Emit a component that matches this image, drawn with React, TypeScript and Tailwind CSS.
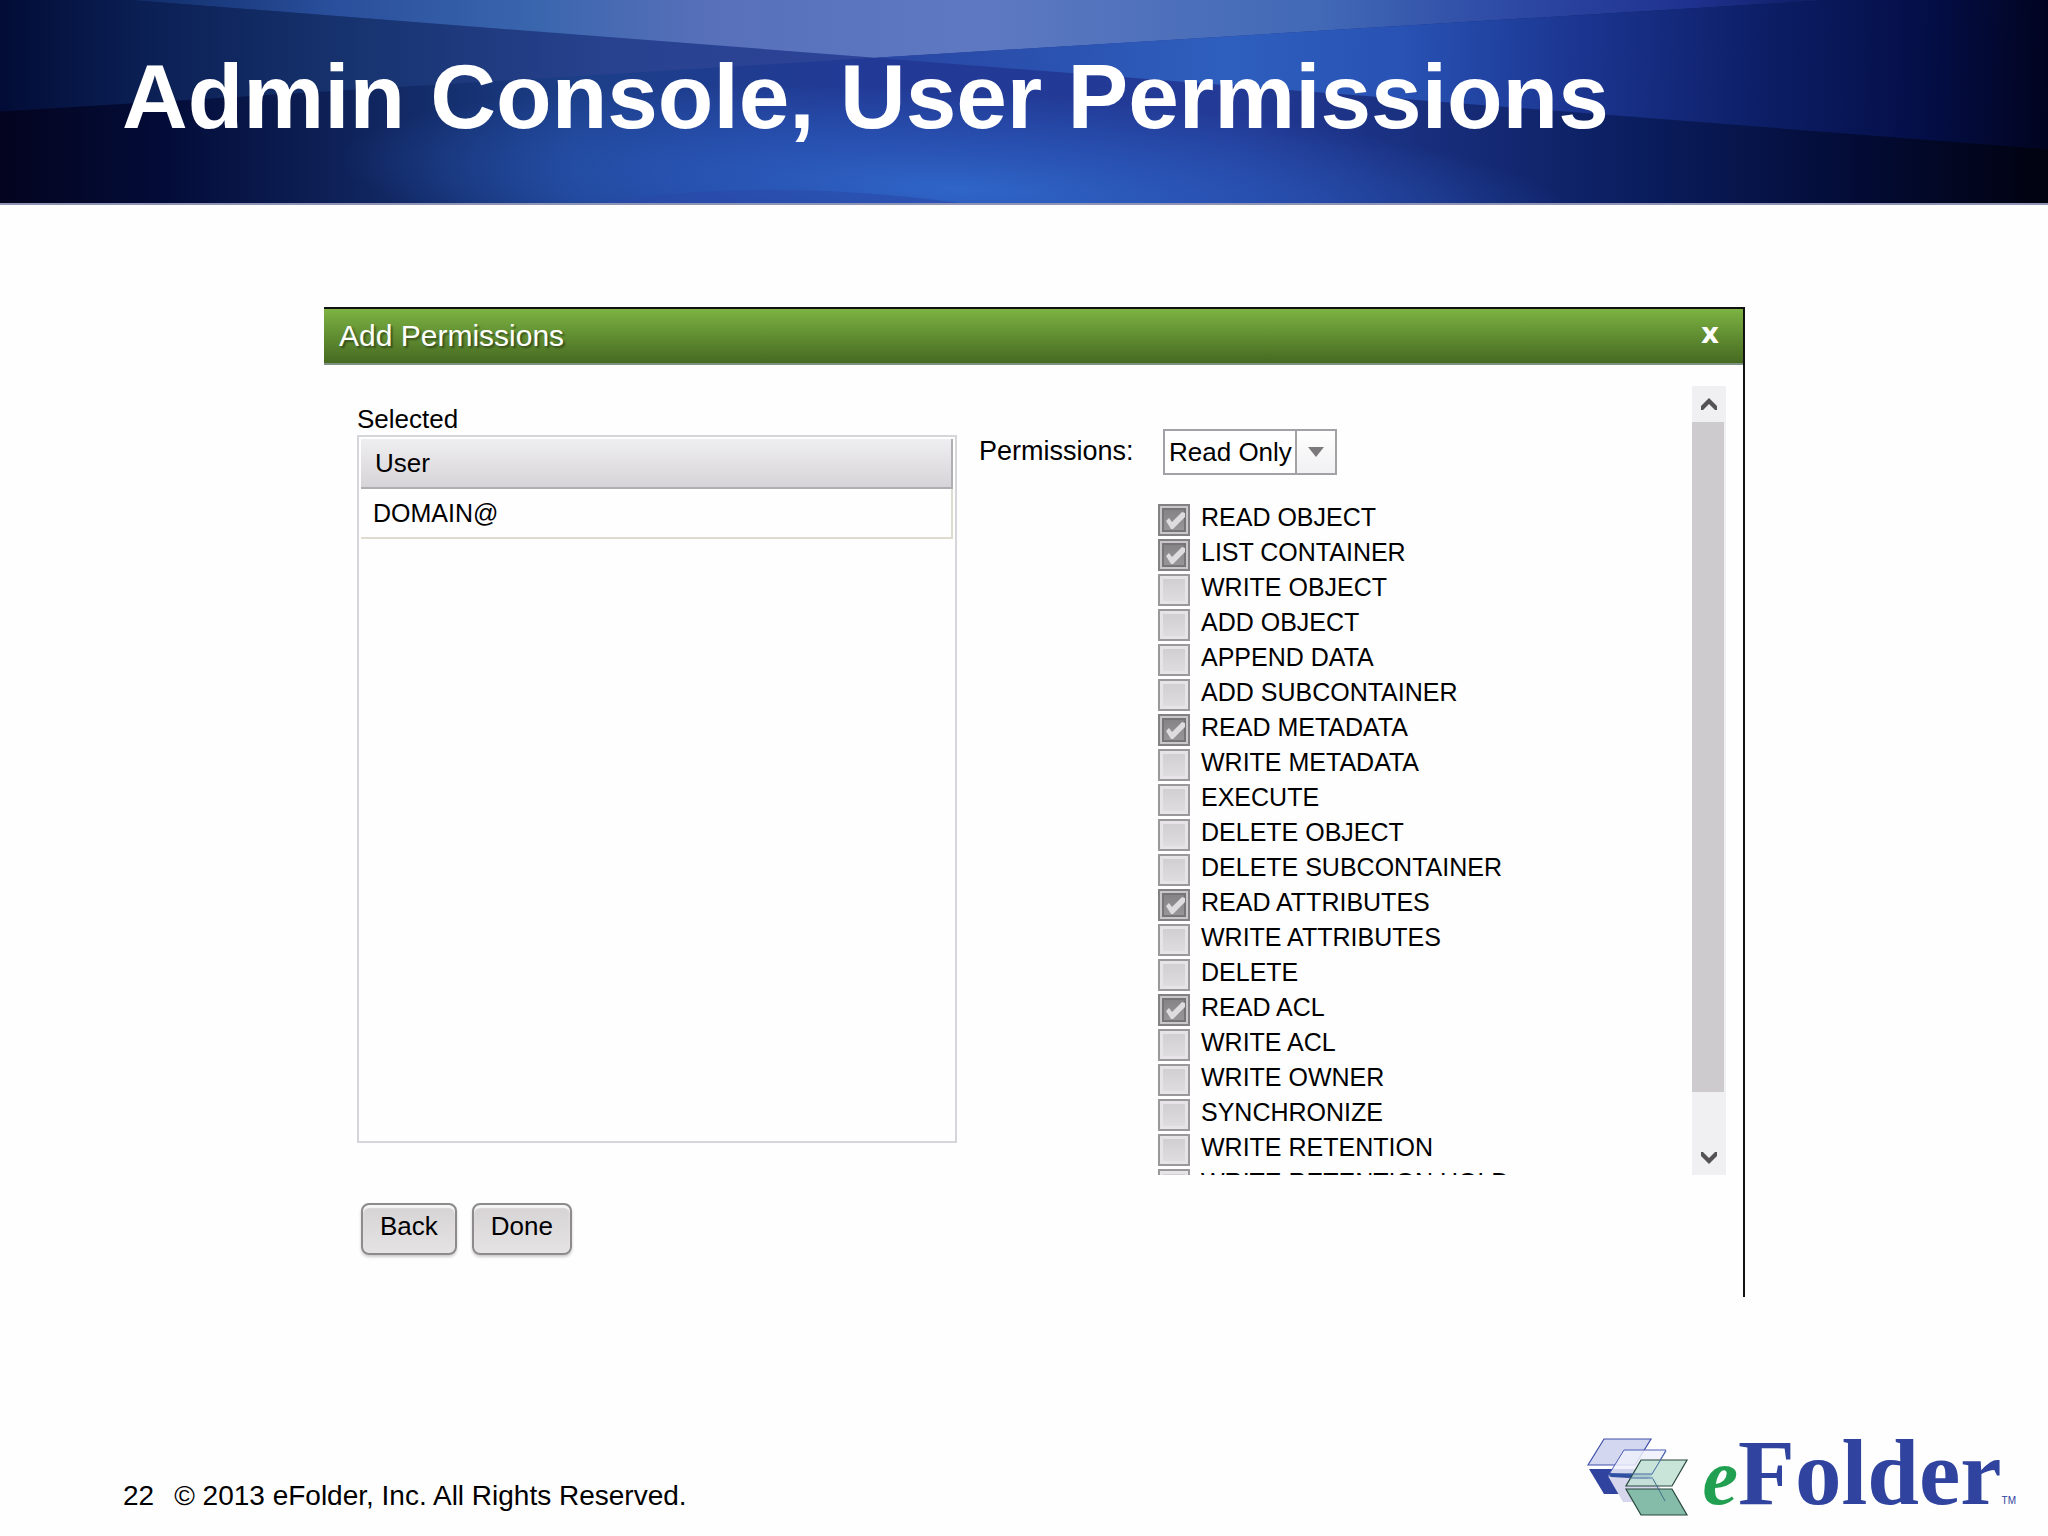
import { useState } from "react";

const PERMISSIONS = [
  { name: "READ OBJECT", on: true },
  { name: "LIST CONTAINER", on: true },
  { name: "WRITE OBJECT", on: false },
  { name: "ADD OBJECT", on: false },
  { name: "APPEND DATA", on: false },
  { name: "ADD SUBCONTAINER", on: false },
  { name: "READ METADATA", on: true },
  { name: "WRITE METADATA", on: false },
  { name: "EXECUTE", on: false },
  { name: "DELETE OBJECT", on: false },
  { name: "DELETE SUBCONTAINER", on: false },
  { name: "READ ATTRIBUTES", on: true },
  { name: "WRITE ATTRIBUTES", on: false },
  { name: "DELETE", on: false },
  { name: "READ ACL", on: true },
  { name: "WRITE ACL", on: false },
  { name: "WRITE OWNER", on: false },
  { name: "SYNCHRONIZE", on: false },
  { name: "WRITE RETENTION", on: false },
  { name: "WRITE RETENTION HOLD", on: false },
];

const HeaderArt = () => (
  <svg
    className="absolute inset-0 h-full w-full"
    viewBox="0 0 2048 204"
    preserveAspectRatio="none"
    aria-hidden="true"
  >
    <defs>
      <linearGradient id="base" x1="0" x2="1" y1="0" y2="0">
        <stop offset="0" stopColor="#04041f" />
        <stop offset="0.08" stopColor="#030c38" />
        <stop offset="0.18" stopColor="#10255e" />
        <stop offset="0.28" stopColor="#1c3f88" />
        <stop offset="0.42" stopColor="#223a96" />
        <stop offset="0.6" stopColor="#233a96" />
        <stop offset="0.7" stopColor="#182e7c" />
        <stop offset="0.8" stopColor="#0a1d5e" />
        <stop offset="0.91" stopColor="#030b34" />
        <stop offset="1" stopColor="#01020f" />
      </linearGradient>
      <linearGradient id="left" x1="0" x2="875" y1="0" y2="0" gradientUnits="userSpaceOnUse">
        <stop offset="0" stopColor="#020c36" />
        <stop offset="0.15" stopColor="#0a1e52" />
        <stop offset="0.4" stopColor="#17336f" />
        <stop offset="0.7" stopColor="#28428f" />
        <stop offset="1" stopColor="#2e4398" />
      </linearGradient>
      <linearGradient id="top" x1="130" x2="1830" y1="0" y2="0" gradientUnits="userSpaceOnUse">
        <stop offset="0" stopColor="#0f2c68" />
        <stop offset="0.12" stopColor="#2a4f9c" />
        <stop offset="0.24" stopColor="#3a66ae" />
        <stop offset="0.34" stopColor="#5870ba" />
        <stop offset="0.5" stopColor="#5e79c2" />
        <stop offset="0.7" stopColor="#4169b6" />
        <stop offset="0.8" stopColor="#2f4ca6" />
        <stop offset="0.92" stopColor="#1f318e" />
        <stop offset="1" stopColor="#0d1b60" />
      </linearGradient>
      <linearGradient id="right" x1="875" x2="2048" y1="0" y2="40" gradientUnits="userSpaceOnUse">
        <stop offset="0" stopColor="#2845a2" />
        <stop offset="0.3" stopColor="#2e5fbe" />
        <stop offset="0.45" stopColor="#2852b4" />
        <stop offset="0.6" stopColor="#1b3590" />
        <stop offset="0.75" stopColor="#0d1f68" />
        <stop offset="0.9" stopColor="#040e46" />
        <stop offset="1" stopColor="#010420" />
      </linearGradient>
      <radialGradient id="glow">
        <stop offset="0" stopColor="#2f66c8" />
        <stop offset="0.5" stopColor="#2a58ba" stopOpacity="0.7" />
        <stop offset="1" stopColor="#2a58ba" stopOpacity="0" />
      </radialGradient>
    </defs>
    <rect width="2048" height="204" fill="url(#base)" />
    <polygon points="0,0 130,0 875,58 0,112" fill="url(#left)" />
    <ellipse cx="960" cy="190" rx="620" ry="100" fill="url(#glow)" transform="rotate(3 960 190)" />
    <polygon points="130,0 1830,0 875,58" fill="url(#top)" />
    <polygon points="875,58 1830,0 2048,0 2048,150" fill="url(#right)" />
    <path d="M600 204Q760 178 960 204z" fill="#2a4aa8" fillOpacity="0.6" />
  </svg>
);

const CheckBox = ({ id, defaultChecked }: { id: string; defaultChecked: boolean }) => (
  <span className="relative block h-8 w-8 shrink-0">
    <input
      id={id}
      type="checkbox"
      defaultChecked={defaultChecked}
      className="peer block h-8 w-8 appearance-none border-2 border-[#9a989b] bg-linear-to-b from-[#cfcdd0] to-[#e0dee1] shadow-[inset_0_0_0_3px_#e6e4e7] checked:border-[#838184] checked:from-[#828083] checked:to-[#9b999c] checked:shadow-[inset_0_0_0_2px_#c9c7ca,inset_0_0_0_4px_#777578]"
    />
    <svg
      className="pointer-events-none absolute inset-0 hidden h-8 w-8 peer-checked:block"
      viewBox="0 0 32 32"
      aria-hidden="true"
    >
      <path d="M8 17l3-3 3 4L24 8l3 1v4L15 25h-2z" fill="#dedcdf" />
    </svg>
  </span>
);

const LogoMark = () => (
  <svg className="h-20 w-[102px]" viewBox="0 0 102 80" aria-hidden="true">
    <polygon points="2,31 48,31 64,56 17,56" fill="#2f439f" />
    <polygon points="17,1 64,1 48,27 1,27" fill="#d3d8f0" stroke="#3e4ea8" strokeWidth="1.2" />
    <polygon points="21,38 66,38 82,64 36,64" fill="#d6d6ec" />
    <polygon points="37,12 79,12 64,38 21,38" fill="#eef0fa" fillOpacity="0.85" stroke="#4c5db4" strokeWidth="1" />
    <polygon points="21,35 66,36 60,41 24,39" fill="#2f4fa2" />
    <polygon points="54,22 100,22 85,48 39,48" fill="#bfe0d4" fillOpacity="0.85" stroke="#26463c" strokeWidth="1.2" />
    <path d="M79 13L65 36M40 36h25M42 40h24" fill="none" stroke="#4c6fa8" strokeWidth="1" />
    <polygon points="39,51 85,51 100,77 54,77" fill="#85bba9" stroke="#26463c" strokeWidth="1.2" />
    <path d="M66 41l12 22" stroke="#3d6f88" strokeWidth="1" />
  </svg>
);

const App = () => {
  const [level, setLevel] = useState("Read Only");

  return (
    <div className="flex min-h-screen flex-col bg-[#fefefe] font-['Liberation_Sans',Arial,sans-serif] text-black">
      {/* Slide title */}
      <header className="relative border-b-2 border-[#8f93b4] bg-[#0a1c5c] pt-[46px] pb-[55px]">
        <HeaderArt />
        <h1 className="relative px-[122px] text-[91px] leading-[102px] font-bold text-white">
          Admin Console, User Permissions
        </h1>
      </header>

      {/* Dialog */}
      <main className="mt-[102px] mr-[303px] ml-[324px] border-t-2 border-r-2 border-[#111] pb-[42px] text-[26px] leading-8">
        <div className="flex items-center justify-between border-b-2 border-[#7f9182] bg-linear-to-b from-[#7db343] to-[#466a21] pr-6 pl-[15px]">
          <h2 className="py-2 text-[30px] leading-[38px] text-white [text-shadow:2px_2px_2px_#0006]">
            Add Permissions
          </h2>
          <button
            type="button"
            aria-label="Close"
            className="pb-1 font-['DejaVu_Sans',sans-serif] text-[28px] leading-8 font-bold text-white"
          >
            x
          </button>
        </div>

        <div className="mt-[21px] flex pr-[17px] pl-[33px]">
          {/* Selected users */}
          <section className="flex w-[600px] flex-col pt-[17px] pb-8">
            <h3>Selected</h3>
            <div className="grow border-2 border-[#d6d5d9] p-0.5">
              <table className="w-full border-collapse">
                <thead>
                  <tr>
                    <th className="h-[49px] border-r-2 border-b-2 border-[#b0aeb2] bg-linear-to-b from-[#efeef0] to-[#d6d4d7] pl-3.5 text-left font-normal">
                      User
                    </th>
                  </tr>
                </thead>
                <tbody>
                  <tr>
                    <td className="h-[50px] border-r-2 border-b-2 border-[#dedbcf] pl-3 text-[25px]">
                      DOMAIN@
                    </td>
                  </tr>
                </tbody>
              </table>
            </div>
          </section>

          {/* Permission level and flags */}
          <section className="h-[789px] grow overflow-hidden pl-[22px]">
            <div className="flex items-center pt-[43px]">
              <label htmlFor="level" className="w-[184px] pb-0.5 text-[27px]">
                Permissions:
              </label>
              <div className="relative">
                <select
                  id="level"
                  value={level}
                  onChange={(e) => setLevel(e.target.value)}
                  className="block h-[46px] w-[174px] appearance-none border-2 border-[#a3a1a5] bg-white pl-1"
                >
                  <option>Read Only</option>
                  <option>Full Control</option>
                </select>
                <span className="pointer-events-none absolute inset-y-0 right-0 flex w-[42px] items-center justify-center border-2 border-[#a3a1a5] bg-linear-to-b from-white to-[#f1f0f2]">
                  <svg className="h-2.5 w-4" viewBox="0 0 16 10" aria-hidden="true">
                    <path d="M0 0h16L8 10z" fill="#7b797c" />
                  </svg>
                </span>
              </div>
            </div>
            <ul className="mt-[29px] ml-[179px] text-[25px]">
              {PERMISSIONS.map(({ name, on }, i) => (
                <li key={name} className="flex h-[35px]">
                  <CheckBox id={`perm-${i}`} defaultChecked={on} />
                  <label htmlFor={`perm-${i}`} className="-mt-[3px] pl-[11px] whitespace-nowrap">
                    {name}
                  </label>
                </li>
              ))}
            </ul>
          </section>

          {/* Scrollbar */}
          <div className="flex w-[34px] flex-col bg-[#f0eff1]">
            <div className="flex h-9 items-center justify-center">
              <svg className="h-3 w-4" viewBox="0 0 16 12" aria-hidden="true">
                <path d="M8 0l8 8v4h-2L8 6l-6 6H0V8z" fill="#555356" />
              </svg>
            </div>
            <div className="mr-0.5 grow bg-[#cdcbce]" />
            <div className="flex h-[83px] items-end justify-center pb-[11px]">
              <svg className="h-3 w-4" viewBox="0 0 16 12" aria-hidden="true">
                <path d="M8 12l8-8V0h-2L8 6 2 0H0v4z" fill="#555356" />
              </svg>
            </div>
          </div>
        </div>

        <div className="mt-7 flex gap-[15px] pl-[37px]">
          {["Back", "Done"].map((text) => (
            <button
              key={text}
              type="button"
              className="rounded-lg border-2 border-[#8d8b8e] bg-linear-to-b from-[#d6d3d5] to-[#e6e3e4] px-[17px] pt-[5px] pb-[11px] shadow-[inset_0_3px_1px_#f7f6f7,0_2px_3px_#0003]"
            >
              {text}
            </button>
          ))}
        </div>
      </main>

      {/* Slide footer */}
      <footer className="mt-auto flex items-end justify-between pr-8 pb-[18px] pl-[123px]">
        <p className="flex gap-5 pb-1.5 text-[28px] leading-8">
          <span>22</span>
          <span>© 2013 eFolder, Inc. All Rights Reserved.</span>
        </p>
        <a href="#" className="flex items-end font-['Liberation_Serif',serif] font-bold">
          <LogoMark />
          <span className="ml-3.5 flex items-baseline">
            <span className="text-[80px] leading-[78px] text-[#22a052] italic">e</span>
            <span className="text-[93px] leading-[90px] text-[#2f439f]">Folder</span>
            <span className="font-['Liberation_Sans',sans-serif] text-[10px] font-normal text-[#2f439f]">
              TM
            </span>
          </span>
        </a>
      </footer>
    </div>
  );
};

export default App;
